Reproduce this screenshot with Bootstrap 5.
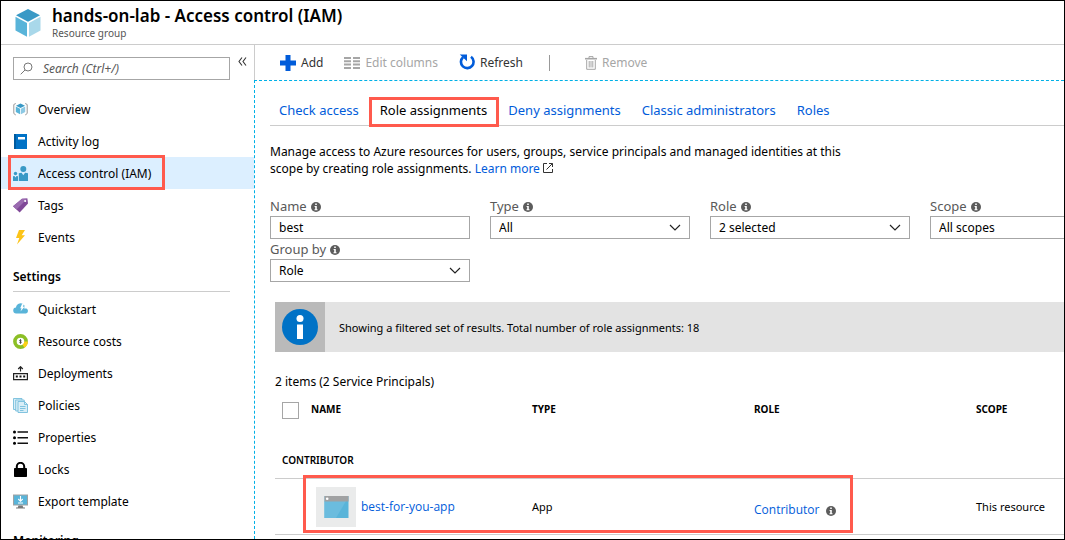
<!DOCTYPE html>
<html lang="en">
<head>
<meta charset="utf-8">
<meta name="viewport" content="width=device-width, initial-scale=1">
<title>hands-on-lab - Access control (IAM)</title>
<link href="https://cdn.jsdelivr.net/npm/bootstrap@5.3.0/dist/css/bootstrap.min.css" rel="stylesheet">
<style>
:root { --az-blue: #015cda; --az-line: #ccc; --az-red: #ff5a4d; }
body { font-family: "Noto Sans", "Open Sans", sans-serif; font-size: 12px; line-height: 17px; color: #000; background: #fff; }
a { color: var(--az-blue); text-decoration: none; }
.portal { height: 100vh; border: 1px solid #000; }
.blade-head { height: 44px; padding: 4px 12px; gap: 9px; border-bottom: 1px solid var(--az-line); }
.blade-head h1 { font-size: 17px; line-height: 22px; font-weight: 600; margin: 0; }
.blade-head p { font-size: 10px; line-height: 13px; color: #555; margin: 0; }
.side { width: 253px; }
.side-top { padding: 12px 6px 13px 12px; gap: 8px; }
.search-box { width: 217px; height: 23px; border: 1px solid #a6a6a6; padding: 0 6px; gap: 10px; }
.search-box input { font-size: 12px; font-style: italic; line-height: 17px; outline: 0; }
.search-box input::placeholder { color: #595959; opacity: 1; }
.collapse-btn { width: 9px; }
.side-link { height: 32px; padding-left: 12px; gap: 10px; color: #000; }
.side-link svg { width: 15px; height: 15px; flex: none; }
.side-link.current { background: #dcefff; }
.side-title { font-size: 12px; line-height: 20px; font-weight: 600; margin: 0 24px 1px 12px; padding: 14px 0 4px; border-bottom: 1px solid var(--az-line); }
.callout-box { position: absolute; border: 3px solid var(--az-red); pointer-events: none; z-index: 2; }
.side-link .callout-box { left: 7px; width: 157px; top: -2px; bottom: -1px; }
.tab-link .callout-box { inset: -1px -2px -3px -2px; }
.app-row .callout-box { left: 28px; width: 550px; top: -4px; height: 58px; }
.toolbar { height: 35px; padding-left: 25px; border-left: 1px solid var(--az-line); }
.tool { gap: 5px; color: #333; height: 35px; margin-right: 21px; }
.tool:disabled { color: #a6a6a6; }
.tool-sep { width: 1px; height: 16px; background: #999; margin: 0 35px 0 5px; }
.blade { border-top: 1px dashed #00b0e6; border-left: 1px dashed #00b0e6; padding: 17px 0 0 15px; }
.tab-row { border-bottom: 1px solid var(--az-line); gap: 2px; font-size: 13px; }
.tab-link { padding: 4px 10px 6px 9px; height: 27px; }
.tab-link.active { color: #000; border-bottom: 1px solid #000; }
.intro { max-width: 590px; margin: 17px 0 19px; }
.filter { width: 200px; flex: none; }
.filter-row { gap: 20px; }
.filter label { display: flex; align-items: center; height: 20px; gap: 4px; color: #595959; font-size: 13px; }
.filter label svg { margin-top: 2px; }
.field { display: block; width: 100%; height: 23px; font-size: 12px; color: #000; background-color: #fff; border: 1px solid #a6a6a6; border-radius: 0; padding: 0 8px; line-height: 17px; }
select.field { appearance: none; background-image: url("data:image/svg+xml,%3Csvg xmlns='http://www.w3.org/2000/svg' width='12' height='7'%3E%3Cpath d='M1 1l5 5 5-5' fill='none' stroke='%23222' stroke-width='1.2'/%3E%3C/svg%3E"); background-repeat: no-repeat; background-position: right 8px center; }
.notice { background: #e3e3e3; margin: 20px 0 0 5px; font-size: 11px; }
.notice-mark { width: 50px; height: 50px; background: #bababa; }
.notice-text { padding-left: 14px; }
.summary { margin: 21px 0 12px 5px; }
.roles { margin-left: 5px; width: 888px; table-layout: fixed; font-size: 11px; }
.roles th { font-size: 10px; font-weight: 700; padding: 0; vertical-align: top; line-height: 15px; }
.roles thead th { height: 42px; }
.roles .group-row th { height: 34px; padding: 9px 7px 10px; font-weight: 600; }
.app-row td { height: 56px; padding: 0; border-top: 1px solid var(--az-line); border-bottom: 1px solid var(--az-line); vertical-align: middle; }
.app-row a { font-family: "Open Sans", sans-serif; font-size: 12px; }
.tick { appearance: none; width: 17px; height: 17px; border: 1px solid #a6a6a6; margin: 0 12px 0 7px; }
.app-icon { width: 40px; height: 40px; background: #eaebeb; margin: 0 5px 0 41px; }
.app-row .role-cell { padding-top: 6px; }
</style>
</head>
<body>
<svg width="0" height="0" class="position-absolute" aria-hidden="true">
  <symbol id="info" viewBox="0 0 10 10"><circle cx="5" cy="5" r="5" fill="#5c5c5c"/><path d="M4.200 1.600h1.600v1.400H4.200zM3.600 4h2.200v3.300h.7v1H3.500v-1h.7V5h-.6z" fill="#fff"/></symbol>
</svg>
<div class="portal d-flex flex-column overflow-hidden">
  <header class="blade-head d-flex align-items-center flex-shrink-0">
    <svg width="30" height="30" viewBox="0 0 30 30"><path d="M15 1l12 6.200-12 6.500L3 7.200z" fill="#3999c6"/><path d="M2.500 8.800l11.500 6.200v13.800L2.500 22.600z" fill="#59b4d9"/><path d="M27.500 8.800L16 15v13.800l11.500-6.200z" fill="#a9d8ea"/></svg>
    <div>
      <h1 class="text-nowrap">hands-on-lab - Access control (IAM)</h1>
      <p>Resource group</p>
    </div>
  </header>
  <div class="d-flex flex-grow-1 overflow-hidden">
    <nav class="side flex-shrink-0 overflow-hidden" aria-label="Resource menu">
      <div class="side-top d-flex align-items-start">
        <div class="search-box d-flex align-items-center flex-shrink-0">
          <svg width="13" height="13" viewBox="0 0 13 13" class="flex-shrink-0" fill="none" stroke="#777"><circle cx="8" cy="5" r="4"/><path d="M5 8L.7 12.300"/></svg>
          <input type="search" class="border-0 p-0 w-100 bg-transparent" placeholder="Search (Ctrl+/)" aria-label="Search">
        </div>
        <button type="button" class="collapse-btn border-0 p-0 bg-transparent d-flex" aria-label="Collapse menu"><svg width="9" height="9" viewBox="0 0 9 9" fill="none" stroke="#333" stroke-width="1.100"><path d="M4 .5l-3 4 3 4M8 .5l-3 4 3 4"/></svg></button>
      </div>
      <a href="#" class="side-link d-flex align-items-center"><svg viewBox="0 0 15 15"><path d="M2.800 1.500L.8 2.500v9l2 1.500M12.200 1.500l2 1v9l-2 1.500" fill="none" stroke="#999"/><path d="M7.500 1.500l4.500 2.200-4.500 2.300L3 3.700z" fill="#3999c6"/><path d="M2.800 4.500l4.300 2.200v5.600l-4.300-2.200z" fill="#59b4d9"/><path d="M12.200 4.500L7.900 6.700v5.600l4.300-2.200z" fill="#8dc9e4"/></svg>Overview</a>
      <a href="#" class="side-link d-flex align-items-center"><svg viewBox="0 0 15 15"><path d="M1 0h13v15H1z" fill="#0072c6"/><path d="M1 0h2v15H1z" fill="#005a9e"/><path d="M5 3h7v2.500H5z" fill="#fff"/></svg>Activity log</a>
      <a href="#" class="side-link current position-relative d-flex align-items-center" aria-current="page"><svg viewBox="0 0 15 15" fill="#3999c6"><circle cx="10.300" cy="3" r="3"/><path d="M5.800 7.200l2.700-.5 1.800 2.500 1.800-2.500 2.900.5V15H5.800z"/><circle cx="2.500" cy="7.500" r="1.700"/><path d="M0 10.200l1.500-.3 1 1.500 1-1.500 1.500.3V15H0z"/></svg>Access control (IAM)<span class="callout-box"></span></a>
      <a href="#" class="side-link d-flex align-items-center"><svg viewBox="0 0 15 15"><path d="M9 .8l5.400-.3.600 5-8.300 9L0 8.300z" fill="#804998"/><path d="M9 .8L14.400.5 3.500 11.500 0 8.300z" fill="#9a6bb0"/><circle cx="12.200" cy="3" r="1.100" fill="#fff"/></svg>Tags</a>
      <a href="#" class="side-link d-flex align-items-center"><svg viewBox="0 0 15 15"><path d="M6 0h6L8.700 5.200H12L4 14.500 6.300 8H3z" fill="#fcc419"/></svg>Events</a>
      <h2 class="side-title">Settings</h2>
      <a href="#" class="side-link d-flex align-items-center"><svg viewBox="0 0 15 15"><path d="M3.500 11.500a3 3 0 0 1-.5-6 4.600 4.600 0 0 1 8.500-2l-.3 3h2.300a2.700 2.700 0 0 1-.5 5z" fill="#59b4d9"/><path d="M9.200 1.500h2L9.800 4.700h1.700L7.500 9.500l1-3.300H7.200z" fill="#fff"/></svg>Quickstart</a>
      <a href="#" class="side-link d-flex align-items-center"><svg viewBox="0 0 15 15"><circle cx="7.500" cy="7.500" r="5.600" fill="#fff" stroke="#8cbf26" stroke-width="3.600"/><path d="M13.100 7.500a5.600 5.600 0 0 1-2.600 4.700" fill="none" stroke="#fcd116" stroke-width="3.600"/><path d="M8.400 6.400c-.4-.6-1.800-.5-1.800.2 0 .9 1.800.7 1.800 1.600 0 .8-1.500.9-2 .2M7.500 5.300v4.400" fill="none" stroke="#444" stroke-width=".9"/></svg>Resource costs</a>
      <a href="#" class="side-link d-flex align-items-center"><svg viewBox="0 0 15 15"><path d="M.6 7.600h13.800v6H.6zM7.500 5.500V1M5.200 3l2.300-2.300L9.800 3" fill="none" stroke="#222" stroke-width="1.200"/><path d="M2.800 9.600h2v2h-2zM6.500 9.600h2v2h-2zM10.200 9.600h2v2h-2z" fill="#111"/></svg>Deployments</a>
      <a href="#" class="side-link d-flex align-items-center"><svg viewBox="0 0 15 15" fill="#d9eef7" stroke="#76bddb" stroke-width=".9"><path d="M.5.5h8.500v11H.5z"/><path d="M2.700 2h8.500v11H2.700z"/><path d="M5 3.500h6.500l3 3v8H5z"/><path d="M11.500 3.500v3h3M7 8.500h5.500M7 10.500h5.500M7 12.500h3.500" fill="none"/></svg>Policies</a>
      <a href="#" class="side-link d-flex align-items-center"><svg viewBox="0 0 15 15"><path d="M4.500 2H15M4.500 7.700H15M4.500 13.200H15" stroke="#111" stroke-width="1.500"/><circle cx="1.500" cy="2" r="1.500"/><circle cx="1.500" cy="7.700" r="1.500"/><circle cx="1.500" cy="13.200" r="1.500"/></svg>Properties</a>
      <a href="#" class="side-link d-flex align-items-center"><svg viewBox="0 0 15 15"><rect x="1" y="6" width="13" height="9" rx=".8"/><path d="M3.800 7V4.500a3.700 3.700 0 0 1 7.400 0V7" fill="none" stroke="#000" stroke-width="2"/></svg>Locks</a>
      <a href="#" class="side-link d-flex align-items-center"><svg viewBox="0 0 15 15"><path d="M0 .5h15v11H0z" fill="#a0a1a2"/><path d="M1 1.500h13v9H1z" fill="#59b4d9"/><path d="M5.500 11.500h4l.8 2H12v1H3v-1h1.700z" fill="#7a7a7a"/><path d="M7.500 2v5M5.300 5l2.200 2.300L9.700 5M5 9h5" fill="none" stroke="#fff" stroke-width="1.100"/></svg>Export template</a>
      <h2 class="side-title">Monitoring</h2>
    </nav>
    <main class="flex-grow-1 d-flex flex-column overflow-hidden">
      <div class="toolbar d-flex align-items-center flex-shrink-0">
        <button type="button" class="tool d-flex align-items-center border-0 p-0 bg-transparent"><svg width="16" height="16" viewBox="0 0 16 16"><path d="M5.500 0h5v5.500H16v5h-5.500V16h-5v-5.500H0v-5h5.500z" fill="#015cda"/></svg>Add</button>
        <button type="button" disabled class="tool d-flex align-items-center border-0 p-0 bg-transparent"><svg width="16" height="12" viewBox="0 0 16 12"><path d="M0 1h7M9 1h7M0 4.300h7M9 4.300h7M0 7.600h7M9 7.600h7M0 11h7M9 11h7" stroke="#a6a6a6" stroke-width="2"/></svg>Edit columns</button>
        <button type="button" class="tool d-flex align-items-center border-0 p-0 bg-transparent"><svg width="16" height="17" viewBox="0 0 16 17"><path d="M12 2.800A6.300 6.300 0 1 1 4 3.200" fill="none" stroke="#015cda" stroke-width="2.600"/><path d="M.8.500h7.200v6.800L5.600 5z" fill="#015cda"/></svg>Refresh</button>
        <span class="tool-sep"></span>
        <button type="button" disabled class="tool d-flex align-items-center border-0 p-0 bg-transparent"><svg width="12" height="14" viewBox="0 0 12 14" fill="none" stroke="#a6a6a6"><path d="M0 2.700h12" stroke-width="1.600"/><path d="M4 2V.6h4V2M1.700 4v9.300h8.600V4M4.200 5v6.500M6 5v6.500M7.800 5v6.500"/></svg>Remove</button>
      </div>
      <section class="blade flex-grow-1 overflow-hidden">
        <div class="tab-row d-flex text-nowrap">
          <a href="#" class="tab-link">Check access</a>
          <a href="#" class="tab-link active position-relative" aria-current="true">Role assignments<span class="callout-box"></span></a>
          <a href="#" class="tab-link">Deny assignments</a>
          <a href="#" class="tab-link">Classic administrators</a>
          <a href="#" class="tab-link">Roles</a>
        </div>
        <p class="intro">Manage access to Azure resources for users, groups, service principals and managed identities at this scope by creating role assignments. <a href="#">Learn more</a> <svg width="10" height="10" viewBox="0 0 10 10" fill="none" stroke="#333" class="align-baseline"><path d="M4 .5H.5v9h9V6M6 .5h3.500V4M9.500.5L3.500 6.500"/></svg></p>
        <form>
          <div class="d-flex filter-row">
            <div class="filter"><label for="f-name">Name <svg width="10" height="10"><use href="#info"/></svg></label><input id="f-name" type="text" class="field" value="best"></div>
            <div class="filter"><label for="f-type">Type <svg width="10" height="10"><use href="#info"/></svg></label><select id="f-type" class="field"><option>All</option></select></div>
            <div class="filter"><label for="f-role">Role <svg width="10" height="10"><use href="#info"/></svg></label><select id="f-role" class="field"><option>2 selected</option></select></div>
            <div class="filter"><label for="f-scope">Scope <svg width="10" height="10"><use href="#info"/></svg></label><select id="f-scope" class="field"><option>All scopes</option></select></div>
          </div>
          <div class="filter"><label for="f-group">Group by <svg width="10" height="10"><use href="#info"/></svg></label><select id="f-group" class="field"><option>Role</option></select></div>
        </form>
        <div class="notice d-flex align-items-center" role="status">
          <span class="notice-mark d-flex align-items-center justify-content-center"><svg width="36" height="36" viewBox="0 0 36 36"><circle cx="18" cy="18" r="18" fill="#0072c6"/><circle cx="18" cy="9.500" r="3.500" fill="#fff"/><path d="M15 15.500h6V30h-6z" fill="#fff"/></svg></span>
          <span class="notice-text">Showing a filtered set of results. Total number of role assignments: 18</span>
        </div>
        <p class="summary">2 items (2 Service Principals)</p>
        <table class="roles">
          <colgroup><col style="width:257px"><col style="width:222px"><col style="width:222px"><col></colgroup>
          <thead>
            <tr><th><span class="d-flex"><input type="checkbox" class="tick" aria-label="Select all">NAME</span></th><th>TYPE</th><th>ROLE</th><th>SCOPE</th></tr>
          </thead>
          <tbody>
            <tr class="group-row"><th colspan="4">CONTRIBUTOR</th></tr>
            <tr class="app-row">
              <td class="position-relative"><div class="d-flex align-items-center"><span class="app-icon d-flex align-items-center justify-content-center"><svg width="25" height="22" viewBox="0 0 25 22"><path d="M.5 0h24v22H.5z" fill="#59b4d9"/><path d="M.5 5H22L12 22H.5z" fill="#6bbcde"/><path d="M.5 0h24v5.500H.5z" fill="#a0a1a2"/><circle cx="3.200" cy="2.800" r="1.300" fill="#fff"/></svg></span><a href="#">best-for-you-app</a></div><span class="callout-box"></span></td>
              <td>App</td>
              <td class="role-cell"><a href="#">Contributor</a> <svg width="10" height="10" class="ms-1"><use href="#info"/></svg></td>
              <td>This resource</td>
            </tr>
          </tbody>
        </table>
      </section>
    </main>
  </div>
</div>
<script src="https://cdn.jsdelivr.net/npm/bootstrap@5.3.0/dist/js/bootstrap.bundle.min.js"></script>
</body>
</html>
